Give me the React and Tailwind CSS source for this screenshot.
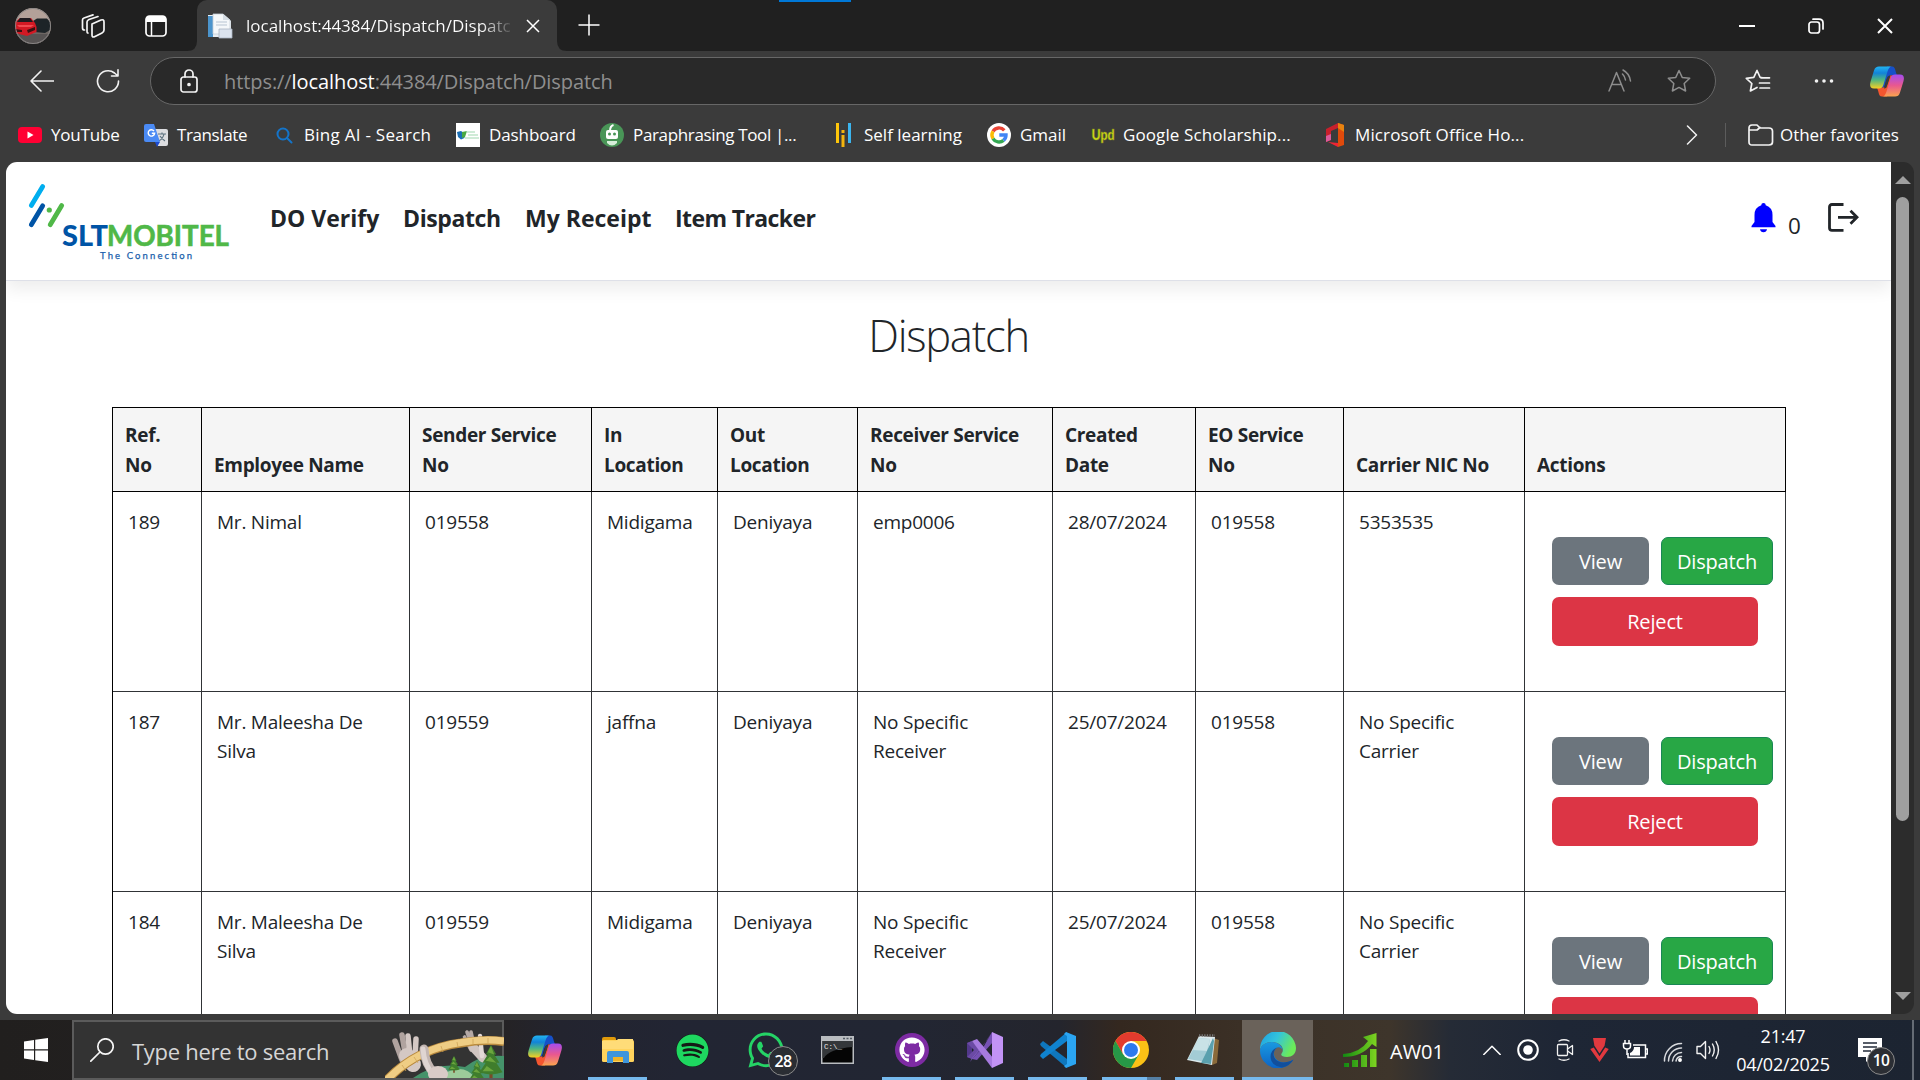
import React from "react";
import { FaSpotify, FaWhatsapp, FaGithub } from "react-icons/fa";

const svgBase = { fill: "none", strokeLinecap: "round", strokeLinejoin: "round" };

function CopilotIcon({ id, className }) {
  return (
    <svg viewBox="0 0 34 30" className={className}>
      <defs>
        <linearGradient id={id + "a"} x1="0" y1="0" x2="0" y2="1">
          <stop offset="0" stopColor="#22b4f2" />
          <stop offset=".3" stopColor="#1283d8" />
          <stop offset=".6" stopColor="#4db583" />
          <stop offset="1" stopColor="#f6d022" />
        </linearGradient>
        <linearGradient id={id + "b"} x1="0" y1="0" x2="0" y2="1">
          <stop offset="0" stopColor="#a44cf0" />
          <stop offset=".5" stopColor="#e9588f" />
          <stop offset="1" stopColor="#fba44f" />
        </linearGradient>
      </defs>
      <path d="M17 0H22C24.5 0 25 2 25.7 5L27 9H21C18 9 17 11 16 14L14 21H11Z" fill="#1650c8" />
      <path d="M17 30H12C9.500 30 9 28 8.300 25L7 21H13C16 21 17 19 18 16L20 9H23Z" fill="#f4562f" />
      <path d="M9 0H22C19.500 0 18.500 2 17.500 5L13.500 18C12.800 20.500 11.500 22 9 22H4C0 22-.5 19 .6 15L4 4C5 1 6.500 0 9 0Z" fill={`url(#${id}a)`} />
      <path d="M25 30H12C14.500 30 15.500 28 16.500 25L20.500 12C21.200 9.500 22.500 8 25 8H30C34 8 34.500 11 33.400 15L30 26C29 29 27.500 30 25 30Z" fill={`url(#${id}b)`} />
      <path d="M17.500 10.500Q18.500 9 20.500 9L16.500 21Q15.500 22 14 22Z" fill="#3a3a3c" />
    </svg>
  );
}

function TitleBar() {
  return (
    <div className="flex h-[51px] items-end bg-[#202020]">
      <div className="flex h-full w-[187px] items-center">
        <svg viewBox="0 0 36 36" className="ml-[15px] h-9 w-9 rounded-full">
          <rect width="36" height="36" fill="#b3a199" />
          <rect y="14" width="36" height="22" fill="#6d6663" />
          <rect y="26" width="36" height="10" fill="#575353" />
          <path d="M18 13L22 10.500H32L35 14V22L30 25L20 24Z" fill="#1d2428" />
          <path d="M0 14L5 10H16L20 15L21.500 19V24L12 28L0 25Z" fill="#d21924" />
          <path d="M5 10H15L18 14H2Z" fill="#1f1b20" />
          <path d="M2 17H19L16 19H4Z" fill="#f04a50" />
          <path d="M0 21L7 22V24H0ZM12 22L20 19V22L13 25Z" fill="#3b1013" />
          <circle cx="18" cy="18" r="17.500" fill="none" stroke="#8a8787" />
        </svg>
        <svg viewBox="0 0 24 24" className="ml-[30px] h-6 w-6" {...svgBase} stroke="#f5f5f5" strokeWidth="1.700">
          <path d="M11 10L20 6Q23 5 23 8V16Q23 18 21 19L14 22.500Q11 24 11 21Z" />
          <path d="M7 19Q6 19 6 17V8Q6 6.500 8 5.500L17 2.500" />
          <path d="M3.500 16Q1.500 16 1.500 14V6Q1.500 4.500 3 4L12 .9" />
        </svg>
        <svg viewBox="0 0 22 22" className="ml-[40px] h-[22px] w-[22px]">
          <rect x="1" y="1" width="20" height="20" rx="3.500" fill="none" stroke="#fff" strokeWidth="1.700" />
          <path d="M1 7V4Q1 1 4 1H18Q21 1 21 4V7Z" fill="#fff" />
          <path d="M6.500 7V21" stroke="#fff" strokeWidth="1.500" />
        </svg>
      </div>
      <svg viewBox="0 0 10 10" className="h-[10px] w-[10px]"><path d="M10 0V10H0Q10 10 10 0Z" fill="#3b3b3b" /></svg>
      <div className="flex h-[51px] w-[360px] items-center rounded-t-[10px] bg-[#3b3b3b] pl-[10px]">
        <svg viewBox="0 0 26 26" className="h-[26px] w-[26px]">
          <path d="M1 2H17L24 8V24H1Z" fill="#e9eef3" />
          <path d="M1 3H6V24H1Z" fill="#4b94cc" />
          <path d="M6 1H16L23 7V21H6Z" fill="#f5f8fa" stroke="#c4cdd6" strokeWidth=".8" />
          <path d="M16 1V7H23" fill="#d5dde4" />
          <path d="M9 9H20M9 12H20" stroke="#cbd5df" strokeWidth="1.500" />
          <path d="M12 16H25V25H12Z" fill="#dbe3ee" stroke="#a9b4c2" strokeWidth=".8" />
        </svg>
        <div className="ml-[13px] w-[267px] whitespace-nowrap bg-gradient-to-r from-white from-88% to-[#4a4a4a] bg-clip-text text-[17px] leading-[26px] text-transparent">
          localhost:44384/Dispatch/Dispatc
        </div>
        <svg viewBox="0 0 14 14" className="ml-[13px] h-[14px] w-[14px]" stroke="#fff" strokeWidth="1.500"><path d="M1 1L13 13M13 1L1 13" /></svg>
      </div>
      <svg viewBox="0 0 10 10" className="h-[10px] w-[10px]"><path d="M0 0V10H10Q0 10 0 0Z" fill="#3b3b3b" /></svg>
      <svg viewBox="0 0 22 22" className="mb-[15px] ml-[11px] h-[22px] w-[22px]" stroke="#fff" strokeWidth="1.500"><path d="M11 .5V21.500M.5 11H21.500" /></svg>
      <div className="ml-[179px] h-[2px] w-[72px] self-start bg-[#0078d7]" />
      <div className="ml-auto mr-[27px] flex h-full items-center gap-[53px]">
        <svg viewBox="0 0 16 16" className="h-4 w-4" stroke="#fff" strokeWidth="2"><path d="M0 8H16" /></svg>
        <svg viewBox="0 0 16 16" className="h-4 w-4" {...svgBase} stroke="#fff" strokeWidth="1.700">
          <rect x="1" y="4" width="10.500" height="11" rx="2.500" /><path d="M5 1.200H11Q15 1.200 15 5V11" />
        </svg>
        <svg viewBox="0 0 16 16" className="h-4 w-4" stroke="#fff" strokeWidth="2"><path d="M1 1L15 15M15 1L1 15" /></svg>
      </div>
    </div>
  );
}

const star = "M12 1.500L15.200 8.400L22.700 9.300L17.200 14.500L18.600 22L12 18.400L5.400 22L6.800 14.500L1.300 9.300L8.800 8.400Z";

function AddressBar() {
  return (
    <div className="flex h-[60px] items-center">
      <svg viewBox="0 0 24 24" className="ml-[30px] h-6 w-6" {...svgBase} stroke="#f2f2f2" strokeWidth="1.600"><path d="M11 2L1 12L11 22M1 12H23.500" /></svg>
      <svg viewBox="0 0 24 24" className="ml-[42px] h-6 w-6" {...svgBase} stroke="#f2f2f2" strokeWidth="1.600"><path d="M22.500 12A10.500 10.500 0 1 1 18.500 4L21.500 6.500M22 .8V7H15.500" /></svg>
      <div className="ml-[30px] flex h-12 w-[1566px] items-center rounded-full border border-[#676767] bg-[#292929]">
        <svg viewBox="0 0 18 24" className="ml-[29px] h-6 w-[18px]" {...svgBase} stroke="#f2f2f2" strokeWidth="1.700">
          <rect x="1" y="8" width="16" height="15" rx="2.500" /><path d="M5 8V5A4 4 0 0 1 13 5V8" /><circle cx="9" cy="15.500" r="1" fill="#f2f2f2" />
        </svg>
        <div className="ml-[26px] mt-[1px] grow whitespace-nowrap text-[20px] leading-[28px] tracking-[-0.080px] text-[#8f8f8f]">
          https://<span className="text-white">localhost</span>:44384/Dispatch/Dispatch
        </div>
        <svg viewBox="0 0 24 24" className="h-6 w-6" {...svgBase} stroke="#8d8d8d" strokeWidth="1.500">
          <path d="M1 22L8.500 3.500L16 22M3.800 15.500H13.200M14.500 5Q17 7.500 17.500 11M15 1Q21.500 4.500 22.500 12" />
        </svg>
        <svg viewBox="0 0 24 24" className="ml-[35px] mr-[24px] h-6 w-6" {...svgBase} stroke="#8d8d8d" strokeWidth="1.500"><path d={star} /></svg>
      </div>
      <svg viewBox="0 0 26 24" className="ml-[29px] h-6 w-[26px]" {...svgBase} stroke="#f2f2f2" strokeWidth="1.700">
        <path d="M17 8.500H15.200L12 1.500L8.800 8.400L1.300 9.300L6.800 14.500L5.400 22L12 18.400M16 8.800H24.500M14.500 14H24.500M15 19H24.500" />
      </svg>
      <svg viewBox="0 0 20 6" className="ml-[43px] h-[6px] w-5" fill="#f2f2f2"><circle cx="2.500" cy="3" r="1.800" /><circle cx="10" cy="3" r="1.800" /><circle cx="17.500" cy="3" r="1.800" /></svg>
      <CopilotIcon id="cpt" className="ml-[36px] h-[31px] w-[34px]" />
    </div>
  );
}

function GoogleG() {
  return (
    <svg viewBox="0 0 24 24" className="h-6 w-6">
      <circle cx="12" cy="12" r="12" fill="#fff" />
      <g fill="none" strokeWidth="3.400">
        <path d="M17.300 7.300A7 7 0 0 0 6 8.400" stroke="#ea4335" />
        <path d="M6 8.400A7 7 0 0 0 6 15.600" stroke="#fbbc05" />
        <path d="M6 15.600A7 7 0 0 0 16.500 17.400" stroke="#34a853" />
        <path d="M16.500 17.400A7 7 0 0 0 19 12H12.300" stroke="#4285f4" />
      </g>
    </svg>
  );
}

const bookmarks = [
  { t: "YouTube", w: "w-[69px] tracking-[-0.200px]", box: "ml-[18px] gap-[9px]", icon: (
    <svg viewBox="0 0 24 24" className="h-6 w-6"><rect y="4" width="24" height="16" rx="4" fill="#ff0033" /><path d="M9.500 8.500V15.500L15.500 12Z" fill="#fff" /></svg>) },
  { t: "Translate", w: "w-[70px] tracking-[-0.400px]", box: "ml-[24px] gap-[9px]", icon: (
    <svg viewBox="0 0 24 24" className="h-6 w-6">
      <path d="M10 6H22Q24 6 24 8V21Q24 23 22 23H14Z" fill="#dcdde0" /><path d="M14 11H22M18 9.500V11M20 11Q19 16 14.500 18M16 13Q18 16 21 18" stroke="#5e7480" fill="none" strokeWidth="1.200" />
      <path d="M11 19H16L13 24Z" fill="#1c4bd0" /><path d="M2 1H10L16 19H2Q0 19 0 17V3Q0 1 2 1Z" fill="#4a8af4" />
      <path d="M10 8A3.200 3.200 0 1 0 10.600 10.300H7.800" stroke="#fff" fill="none" strokeWidth="1.400" />
    </svg>) },
  { t: "Bing AI - Search", w: "w-[128px] tracking-[0.270px]", box: "ml-[25px] gap-[8px]", icon: (
    <svg viewBox="0 0 24 24" className="h-6 w-6" {...svgBase} stroke="#1474c9" strokeWidth="2"><circle cx="11" cy="11" r="5.500" /><path d="M15 15L19.500 19.500" /></svg>) },
  { t: "Dashboard", w: "w-[87px] tracking-[-0.100px]", box: "ml-[24px] gap-[9px]", icon: (
    <svg viewBox="0 0 24 24" className="h-6 w-6"><rect width="24" height="24" fill="#fff" /><path d="M1 9L5 8L8 10L8.500 15L5 16.500L2 14Z" fill="#1b6fb5" /><path d="M6 9L11 8L9 14L6 15Z" fill="#49a942" /><path d="M10 9H19M12 12H22M9 15H23" stroke="#9fd8b0" strokeWidth="1.200" /></svg>) },
  { t: "Paraphrasing Tool |...", w: "w-[165px] tracking-[-0.350px]", box: "ml-[24px] gap-[9px]", icon: (
    <svg viewBox="0 0 24 24" className="h-6 w-6"><circle cx="12" cy="12" r="12" fill="#499557" /><path d="M10 8Q10 3 13.500 2" stroke="#fff" strokeWidth="2" fill="none" /><rect x="6" y="7" width="12" height="9" rx="2" fill="#fff" /><circle cx="9.500" cy="11" r="1.500" fill="#499557" /><circle cx="14.500" cy="11" r="1.500" fill="#499557" /><path d="M7 18H17V20Q12 25 7 20Z" fill="#d7eeda" /></svg>) },
  { t: "Self learning", w: "w-[99px]", box: "ml-[33px] gap-[9px]", icon: (
    <svg viewBox="0 0 24 24" className="h-6 w-6"><path d="M5 0H8V20H5Z" fill="#fec60b" /><path d="M10.500 12H13.500V24H10.500ZM10.500 7H13.500V10H10.500Z" fill="#f3b40d" /><path d="M17 0H20V20H17Z" fill="#3bb5ef" /></svg>) },
  { t: "Gmail", w: "w-[46px]", box: "ml-[24px] gap-[9px]", icon: <GoogleG /> },
  { t: "Google Scholarship...", w: "w-[169px] tracking-[0.100px]", box: "ml-[25px] gap-[8px]", icon: (
    <svg viewBox="0 0 24 24" className="h-6 w-6 overflow-visible"><text x="12" y="16.500" textAnchor="middle" textLength="23" lengthAdjust="spacingAndGlyphs" fontFamily="Lato, sans-serif" fontWeight="900" fontSize="15" fill="#d3e016" stroke="#7b8420" strokeWidth=".6">Upd</text></svg>) },
  { t: "Microsoft Office Ho...", w: "w-[172px] tracking-[0.120px]", box: "ml-[31px] gap-[8px]", icon: (
    <svg viewBox="0 0 24 24" className="h-6 w-6"><path d="M3 6L15 0V5L8 8V17L3 19Z" fill="#c8202c" /><path d="M3 13L8 11V17L3 19Z" fill="#dc5a9a" /><path d="M15 0L21 2V22L15 24Z" fill="#e04a0c" /><path d="M15 0L21 2V9L15 5Z" fill="#e88310" /><path d="M5 19L15 20V24Z" fill="#ef2434" /></svg>) },
];

function BookmarksBar() {
  return (
    <div className="flex h-[51px] items-center pb-[3px] pt-0 text-[17px] leading-[26px] text-white">
      {bookmarks.map((b) => (
        <div key={b.t} className={`flex items-center ${b.box}`}>
          {b.icon}
          <span className={`whitespace-nowrap ${b.w}`}>{b.t}</span>
        </div>
      ))}
      <svg viewBox="0 0 12 20" className="ml-auto h-5 w-3" {...svgBase} stroke="#f2f2f2" strokeWidth="1.500"><path d="M1.500 1L10.500 10L1.500 19" /></svg>
      <div className="ml-[27px] h-6 w-px bg-[#5c5c5c]" />
      <svg viewBox="0 0 26 24" className="ml-[22px] h-6 w-[26px]" {...svgBase} stroke="#f2f2f2" strokeWidth="1.700">
        <path d="M1 19V5Q1 2 4 2H9L12 5H21Q24.500 5 24.500 8V19Q24.500 22 21 22H4Q1 22 1 19ZM1 7H9L12 4.500" />
      </svg>
      <span className="ml-[6px] mr-[21px] w-[119px] whitespace-nowrap tracking-[-0.050px]">Other favorites</span>
    </div>
  );
}

function Logo() {
  return (
    <svg viewBox="20 175 215 90" className="h-[90px] w-[215px]">
      <g strokeWidth="4.800" strokeLinecap="round">
        <path d="M42.700 186.500L31.300 205.500" stroke="#00aeef" />
        <path d="M42.700 205.800L31.300 224.800" stroke="#0054a6" />
        <path d="M61.700 205.500L50.200 224.800" stroke="#50b848" />
      </g>
      <circle cx="49.300" cy="210" r="2.600" fill="#50b848" />
      <g fontFamily="Lato, sans-serif" fontWeight="900">
        <text x="62" y="245.600" fontSize="28.500" fill="#0054a6" textLength="46" lengthAdjust="spacingAndGlyphs">SLT</text>
        <text x="107" y="245.600" fontSize="28.500" fill="#50b848" fontWeight="700" stroke="#50b848" strokeWidth=".6" textLength="122" lengthAdjust="spacingAndGlyphs">MOBITEL</text>
      </g>
      <text x="100" y="258.800" fontSize="9.500" fontFamily="Lato, sans-serif" fontWeight="400" fill="#1a5fac" stroke="#1a5fac" strokeWidth=".25" textLength="92">The Connection</text>
    </svg>
  );
}

function NavBar() {
  return (
    <header className="flex h-[119px] shrink-0 items-start border-b border-[#dee0e8] shadow-[0_8px_16px_rgba(0,0,0,0.075)]">
      <div className="ml-[14px] mt-[13px]"><Logo /></div>
      <nav className="mt-[40px] flex text-[23px] font-bold leading-[32px] text-[#212529]">
        <a className="ml-[35px] w-[133px] whitespace-nowrap">DO Verify</a>
        <a className="w-[122px] whitespace-nowrap tracking-[-0.400px]">Dispatch</a>
        <a className="w-[150px] whitespace-nowrap">My Receipt</a>
        <a className="w-[150px] whitespace-nowrap tracking-[-0.600px]">Item Tracker</a>
      </nav>
      <svg viewBox="0 0 25 30" className="ml-auto mt-[41px] h-[30px] w-[25px]" fill="#0000ff">
        <path d="M12.500 0A2.200 2.200 0 0 1 14.700 2.300Q21.500 4.500 21.500 12V19L24.500 23V24.300H.5V23L3.500 19V12Q3.500 4.500 10.300 2.300A2.200 2.200 0 0 1 12.500 0ZM9 26.300H16Q15.500 29.300 12.500 29.300T9 26.300Z" />
      </svg>
      <span className="ml-[12px] mt-[48px] w-[13px] text-[22.500px] leading-[32px] text-[#212529]">0</span>
      <svg viewBox="0 0 31 29" className="ml-[27px] mr-[32px] mt-[41px] h-[29px] w-[31px]" fill="none" stroke="#212529" strokeWidth="2.800">
        <path d="M15.500 1.500H4Q1.500 1.500 1.500 4V25Q1.500 27.300 4 27.300H15.500M10 14.300H29.500M22.500 7.800L29 14.300L22.500 20.800" />
      </svg>
    </header>
  );
}

const headers = ["Ref. No", "Employee Name", "Sender Service No", "In Location", "Out Location", "Receiver Service No", "Created Date", "EO Service No", "Carrier NIC No", "Actions"];
const wraps = ["w-[50px]", "w-[180px]", "w-[150px]", "w-[90px]", "w-[90px]", "w-[165px]", "w-[90px]", "w-[110px]", "w-[160px]", "w-[160px]"];
const rows = [
  ["189", "Mr. Nimal", "019558", "Midigama", "Deniyaya", "emp0006", "28/07/2024", "019558", "5353535"],
  ["187", "Mr. Maleesha De Silva", "019559", "jaffna", "Deniyaya", "No Specific Receiver", "25/07/2024", "019558", "No Specific Carrier"],
  ["184", "Mr. Maleesha De Silva", "019559", "Midigama", "Deniyaya", "No Specific Receiver", "25/07/2024", "019558", "No Specific Carrier"],
];
const cols = "grid grid-cols-[89px_208px_182px_126px_140px_195px_143px_148px_181px_261px]";

function DispatchTable() {
  return (
    <div className="ml-[106px] mt-[42px] w-[1674px] shrink-0 border-l border-t border-black text-[19px] text-[#212529]">
      <div className={`${cols} h-[84px] bg-[#f5f5f5] font-bold leading-[30px] tracking-[-0.320px]`}>
        {headers.map((h, i) => (
          <div key={h} className="flex items-end border-b border-r border-black pb-[11px] pl-[12px]">
            <span className={wraps[i]}>{h}</span>
          </div>
        ))}
      </div>
      {rows.map((r, n) => (
        <div key={r[0]} className={`${cols} leading-[29px] tracking-[-0.230px] ${n === 2 ? "h-[123px] overflow-hidden" : "h-[200px]"}`}>
          {r.map((c, i) => (
            <div key={i} className="border-b border-r border-[#303336] pl-[15px] pt-[16px]">
              <div className={i === 1 ? "w-[160px]" : i === 5 || i === 8 ? "w-[120px]" : ""}>{c}</div>
            </div>
          ))}
          <div className="border-b border-r border-[#303336] pl-[27px] pt-[45px] text-[20px] leading-[30px] tracking-[-0.150px] text-white">
            <div className="flex gap-[12px]">
              <button className="h-12 w-[97px] rounded-[7px] bg-[#6c757d] pt-[1px]">View</button>
              <button className="h-12 w-[112px] rounded-[7px] border border-[#198754] bg-[#28a745] pt-[1px]">Dispatch</button>
            </div>
            <button className="mt-[12px] h-[49px] w-[206px] rounded-[7px] bg-[#dc3545] pt-[1px]">{n === 2 ? "" : "Reject"}</button>
          </div>
        </div>
      ))}
    </div>
  );
}

function Page() {
  return (
    <div className="ml-[6px] flex h-[852px] w-[1908px] overflow-hidden rounded-[11px]">
      <main className="flex w-[1885px] flex-col overflow-hidden bg-white">
        <NavBar />
        <h1 className="mt-[26px] h-[58px] shrink-0 text-center text-[43.500px] font-light leading-[58px] tracking-[-1.250px] text-[#212529]">Dispatch</h1>
        <DispatchTable />
      </main>
      <div className="flex w-[23px] flex-col items-center bg-[#2c2c2c]">
        <svg viewBox="0 0 16 8" className="mt-[14px] h-2 w-4" fill="#9f9f9f"><path d="M8 0L16 8H0Z" /></svg>
        <div className="mt-[13px] h-[624px] w-[13px] rounded-full bg-[#9f9f9f]" />
        <svg viewBox="0 0 16 8" className="mb-[14px] mt-auto h-2 w-4" fill="#9f9f9f"><path d="M0 0H16L8 8Z" /></svg>
      </div>
    </div>
  );
}

function Tree({ x, y, s }) {
  return (
    <g transform={`translate(${x} ${y}) scale(${s})`}>
      <path d="M-1.500 24H1.500V32H-1.500Z" fill="#7a4a26" />
      <path d="M0 0L5 9H3L8 17H5L11 26Q0 30-11 26L-5 17H-8L-3 9H-5Z" fill="#3f7d2c" />
      <path d="M0 1L3 9L-3 7ZM-1 11L5 17L-5 15ZM-4 20L3 25L-8 25Z" fill="#6ba53d" />
    </g>
  );
}

function SearchArt() {
  return (
    <svg viewBox="0 2 119 56" className="h-[56px] w-[119px]">
      <path d="M28 58Q52 41 80 47Q96 34 119 36V58Z" fill="#45936a" />
      <path d="M62 52Q80 44 90 58H55Z" fill="#9ccb9a" />
      <g stroke="#b5a9a5" strokeLinecap="round" fill="none">
        <path d="M79.500 17L86 30M82 12L88 28M86 12L90 30" strokeWidth="3.600" />
        <path d="M88 27L98 38" strokeWidth="9" stroke="#d0c4c0" />
        <path d="M95 16L97 36" strokeWidth="4.500" stroke="#e3d9d6" />
      </g>
      <g stroke="#d4c8c4" strokeLinecap="round" fill="none">
        <path d="M10 21L17 40M17 15L21 38" strokeWidth="5.500" stroke="#b0a39f" />
        <path d="M23 16L25 36M31 19L30 38" strokeWidth="5.500" />
        <path d="M22 36L28 44" strokeWidth="16" />
      </g>
      <path d="M0 62Q30 29 76 23Q98 19 119 21.500" fill="none" stroke="#b98a3e" strokeWidth="9" />
      <path d="M0 62Q30 29 76 22.500Q98 18.500 119 21" fill="none" stroke="#efcd84" strokeWidth="7" />
      <path d="M17 45L21 51M29 37L33 43M56 26L58 32M72 22L73 27M88 19L88 24M103 18L103 23" stroke="#cfa458" strokeWidth=".8" />
      <path d="M39 29Q40 45 50 54" fill="none" stroke="#c3b6b2" strokeWidth="9" strokeLinecap="round" />
      <path d="M38 29Q39 45 48 54" fill="none" stroke="#dfd5d2" strokeWidth="5" strokeLinecap="round" />
      <ellipse cx="53" cy="54" rx="10" ry="8" fill="#d9cbc7" />
      <Tree x={69} y={36} s={0.52} />
      <Tree x={92} y={41} s={0.72} />
      <Tree x={106} y={25} s={1.05} />
    </svg>
  );
}

const apps = [
  { n: "copilot", el: <CopilotIcon id="cpb" className="h-[31px] w-[34px]" /> },
  { n: "explorer", on: true, el: (
    <svg viewBox="0 0 34 34" className="h-[34px] w-[34px]">
      <path d="M1 6Q1 4 3 4H13Q15 4 15 6V10H1Z" fill="#e09a0a" /><rect x="1" y="7" width="32" height="22" rx="1.500" fill="#ffd35c" /><path d="M1 8H15L17 6H32V16H1Z" fill="#ffdc78" />
      <path d="M6 30V20Q6 18 8 18H26Q28 18 28 20V30H22V24H12V30Z" fill="#3e95dc" /><path d="M12 24H22V28H12Z" fill="#f0b429" />
    </svg>) },
  { n: "spotify", el: <span className="ml-[2px] flex h-[33px] w-[33px] items-center justify-center rounded-full bg-[#151b16] text-[33px] text-[#1ed760]"><FaSpotify /></span> },
  { n: "whatsapp", el: (
    <span className="relative ml-[3px] text-[40px] text-[#25d366]"><FaWhatsapp />
      <span className="absolute left-[22px] top-[16px] flex h-[30px] w-[30px] items-center justify-center rounded-full border border-[#8b8b8b] bg-[#2a2d33] text-[16px] font-semibold leading-none tracking-[-0.500px] text-white">28</span>
    </span>) },
  { n: "cmd", el: (
    <svg viewBox="0 0 33 28" className="h-7 w-[33px]"><rect width="33" height="28" fill="#b9bcc0" /><path d="M22 2.500H31" stroke="#535a63" strokeWidth="1.500" strokeDasharray="2 1.500" /><rect x="1.500" y="5" width="30" height="21.500" fill="#050505" /><path d="M1.500 5H31.500V11Q8 13 3 22H1.500Z" fill="#34373a" /><text x="3" y="12.500" fontFamily="Liberation Mono, monospace" fontSize="7.500" fill="#e8e8e8">C:\_</text></svg>) },
  { n: "github", on: true, el: <span className="ml-px flex h-[34px] w-[34px] items-center justify-center rounded-full bg-[#7d2ba3] text-[26px] text-white"><FaGithub /></span> },
  { n: "vs", on: true, el: (
    <svg viewBox="0 0 36 36" className="ml-px h-9 w-9"><path d="M0 11L5 9V27L0 25Z" fill="#52388a" /><path d="M0 11L5 9L13 18L5 27L0 25L7 18Z" fill="#6b4aa5" /><path d="M25 0L17 12L3 30L5 26L20 8Z" fill="#7f5cc0" /><path d="M25 0L26 10L10 28L5 27L17 14Z" fill="#7651b4" /><path d="M5 9L10 7L27 27L25 36Z" fill="#a77be0" /><path d="M25 0L36 5V31L25 36Z" fill="#c293f5" /></svg>) },
  { n: "vscode", on: true, el: (
    <svg viewBox="0 0 36 36" className="ml-px h-9 w-9"><path d="M0 12L3 9L27 27V36L1 14Z" fill="#0f77bd" /><path d="M0 24L3 27L27 9V0L1 22Z" fill="#1083cf" /><path d="M26 0L36 4V32L26 36L24 34L27 32V4L24 2Z" fill="#2ba5f2" /></svg>) },
  { n: "chrome", on: true, el: (
    <svg viewBox="0 0 36 36" className="h-9 w-9"><circle cx="18" cy="18" r="18" fill="#fbc116" /><path d="M2.400 9A18 18 0 0 1 33.600 9H18L10.200 22.500Z" fill="#e33b2e" /><path d="M2.400 9A18 18 0 0 0 18 36L25.800 22.500H10.200Z" fill="#279847" /><circle cx="18" cy="18" r="9" fill="#fff" /><circle cx="18" cy="18" r="7" fill="#2d79ee" /></svg>) },
  { n: "notepad", on: true, el: (
    <svg viewBox="0 0 34 34" className="mr-[2px] h-[34px] w-[34px]"><path d="M27 5L33 7L31 30L26 32Z" fill="#8a6a3a" /><path d="M13 3L29 4L26 32L1 27Z" fill="#dce9ec" /><path d="M13 5L24 6L20 29L2 26Z" fill="#a3ccd5" /><path d="M13 5L24 6L21 18L7 17Z" fill="#c9e2e6" /><path d="M20 20L27 5L28 8L25 31L15 30Z" fill="#5aa0ad" /><path d="M13 2.500H29" stroke="#777" strokeWidth="2.500" strokeDasharray="1.300 1.300" /></svg>) },
  { n: "edge", active: true, el: (
    <svg viewBox="0 0 36 36" className="h-9 w-9">
      <defs>
        <linearGradient id="eg1" x1="0" y1="0" x2="1" y2=".4"><stop offset="0" stopColor="#1b9de2" /><stop offset=".5" stopColor="#33c4dc" /><stop offset="1" stopColor="#6bea5a" /></linearGradient>
        <linearGradient id="eg2" x1="0" y1="0" x2="0" y2="1"><stop offset="0" stopColor="#1a9ae0" /><stop offset="1" stopColor="#0d63c4" /></linearGradient>
      </defs>
      <path d="M0 18A18 18 0 0 1 36 16C36 22 32 25 27 25C22 25 20 23 22 21C25 16 20 10 12 10C6 10 1 13 0 18Z" fill="url(#eg1)" />
      <path d="M0 18C1 13 6 10 12 10C18 10 23 14 22.500 19C22 14 15 14 14 20C13 27 20 32 28 30C30 29.500 32 28.500 33.500 27.500A18 18 0 0 1 0 18Z" fill="url(#eg2)" />
      <path d="M14 20C12 26 18 32 27 30Q31 29 33.500 27.500Q30 34 22 35.500Q11 34 10.500 25Q10.500 18 17 15.500Q14.500 17 14 20Z" fill="#124f9c" />
    </svg>) },
];

function Taskbar() {
  return (
    <div className="flex h-[60px] items-center bg-[linear-gradient(90deg,#211f1e_0px,#252325_504px,#23242f_560px,#222533_680px,#222633_900px,#24252d_1060px,#34281f_1120px,#3b3026_1240px,#3e352b_1390px,#252b36_1450px,#1e2635_1560px,#1c2431_1920px)] text-white">
      <div className="flex w-[72px] items-center justify-center">
        <svg viewBox="0 0 24 24" className="h-6 w-6" fill="#fff"><path d="M0 3.400L10 2V11.300H0ZM11.200 1.800L24 0V11.300H11.200ZM0 12.500H10V22L0 20.600ZM11.200 12.500H24V24L11.200 22.200Z" /></svg>
      </div>
      <div className="flex h-[60px] w-[432px] items-center border-2 border-[#5b5b5b] bg-[#333333]">
        <svg viewBox="0 0 24 24" className="ml-[16px] h-6 w-6" {...svgBase} stroke="#f5f5f5" strokeWidth="1.700"><circle cx="15.500" cy="8.500" r="7.700" /><path d="M10 14L.8 23.200" /></svg>
        <span className="ml-[18px] mt-[2px] w-[253px] whitespace-nowrap text-[22px] leading-[30px] tracking-[-0.280px] text-[#d6d6d6]">Type here to search</span>
        <div className="-mr-[2px] w-[119px] shrink-0"><SearchArt /></div>
      </div>
      <div className="ml-[4px] flex h-full w-[807px]">
        {apps.map((a) => (
          <div key={a.n} className="flex h-full w-[73.300px] flex-col items-center">
            <div className={a.active ? "flex h-[57px] w-[71px] items-center justify-center bg-[#6a625a] pt-[3px]" : "flex h-[57px] items-center pt-[3px]"}>{a.el}</div>
            {a.active ? <div className="h-[3px] w-[71px] bg-[#76b9ed]" /> : a.n === "chrome" ? (
              <div className="flex"><div className="h-[3px] w-[45px] bg-[#76b9ed]" /><div className="h-[3px] w-[14px] bg-[#557fa3]" /></div>
            ) : a.on ? <div className="h-[3px] w-[59px] bg-[#76b9ed]" /> : null}
          </div>
        ))}
      </div>
      <svg viewBox="0 0 34 34" className="ml-[28px] h-[34px] w-[34px]">
        <defs><linearGradient id="gr" x1="0" y1="0" x2="1" y2="0"><stop offset="0" stopColor="#128a12" /><stop offset="1" stopColor="#7ed321" /></linearGradient></defs>
        <path d="M0 21Q17 20 25 8L20 4L33.500 0V14L29 11Q19 24 0 24Z" fill="url(#gr)" />
        <path d="M1 30H6V34H1ZM9 27H15V34H9ZM18 22H24V34H18ZM27 16H33.500V34H27Z" fill="url(#gr)" />
      </svg>
      <span className="ml-[13px] mt-[3px] w-[54px] whitespace-nowrap text-[20px] leading-[28px]">AW01</span>
      <div className="ml-[39px] flex items-center">
        <svg viewBox="0 0 18 10" className="h-[10px] w-[18px]" {...svgBase} stroke="#fff" strokeWidth="1.500"><path d="M.8 9.500L9 1.200L17.200 9.500" /></svg>
        <svg viewBox="0 0 22 22" className="ml-[16px] h-[22px] w-[22px]"><circle cx="11" cy="11" r="9.800" fill="none" stroke="#fff" strokeWidth="2" /><circle cx="11" cy="11" r="4.800" fill="#fff" /></svg>
        <svg viewBox="0 0 18 24" className="ml-[17px] h-6 w-[18px]" {...svgBase} stroke="#f2f2f2" strokeWidth="1.300"><rect x="1.500" y="6.500" width="10" height="11" rx="1" /><path d="M11.500 11L16.500 7.500V16.500L11.500 13M3 3Q8 .5 13 3M3 21Q8 23.500 13 21" /></svg>
        <svg viewBox="0 0 20 26" className="ml-[16px] h-6 w-[19px]" fill="#e2393f"><path d="M3 0H17L15.500 8.500L10 16.800L4.500 8.500Z" /><path d="M0 12L3.800 10.300L10 19.800L16.200 10.300L20 12L10 26Z" /></svg>
        <svg viewBox="0 0 26 22" className="ml-[13px] h-[22px] w-[26px]" fill="none" stroke="#fff" strokeWidth="1.500"><path d="M11 6H23.500V18.500H6V14M24 10H25.500V15H24" /><path d="M12 8H18V16.500H8V14Q12 12 12 8Z" fill="#fff" stroke="none" /><path d="M3 1V4M7 1V4M1.500 4.500H8.500V7Q8.500 10 5 10T1.500 7ZM5 10V16" /></svg>
        <svg viewBox="0 0 20 20" className="ml-[15px] mt-[4px] h-5 w-5" {...svgBase} stroke="#d8dade" strokeWidth="1.500"><path d="M1.500 19A17 17 0 0 1 18.500 1.500M5.500 19A13 13 0 0 1 18.500 6M9.500 19A9 9 0 0 1 18.500 10.500M13 19A5.500 5.500 0 0 1 18.500 14.500" /><circle cx="17" cy="18" r="1.200" fill="#fff" stroke="#fff" /></svg>
        <svg viewBox="0 0 24 22" className="ml-[13px] h-[22px] w-6" {...svgBase} stroke="#f2f2f2" strokeWidth="1.400"><path d="M1 7.500H4.500L9.500 2.500V19.500L4.500 14.500H1ZM13 7.500Q15 11 13 14.500M16.500 5Q20 11 16.500 17M20 2.500Q25 11 20 19.500" /></svg>
      </div>
      <div className="ml-[11px] w-[104px] text-center text-[18px] leading-[28px] tracking-[-0.200px]">
        <div>21:47</div>
        <div>04/02/2025</div>
      </div>
      <div className="relative ml-[23px] h-6 w-6">
        <svg viewBox="0 0 24 24" className="h-6 w-6"><path d="M0 0H24V19H13L8 24V19H0Z" fill="#fff" /><path d="M5 5H19M5 9H19M5 13H13" stroke="#222a38" strokeWidth="1.600" /></svg>
        <span className="absolute left-[9px] top-[9px] flex h-[28px] w-[28px] items-center justify-center rounded-full border border-[#8b8b8b] bg-[#2b2e34] text-[15.500px] font-semibold leading-none tracking-[-0.500px]">10</span>
      </div>
      <div className="ml-auto mr-[6px] h-[60px] w-[2px] bg-[#646b75]" />
    </div>
  );
}

export default function App() {
  return (
    <div className="flex h-[1080px] w-[1920px] flex-col overflow-hidden bg-[#3b3b3b] font-['Open_Sans','Noto_Sans',sans-serif]">
      <TitleBar />
      <AddressBar />
      <BookmarksBar />
      <Page />
      <div className="h-[6px]" />
      <Taskbar />
    </div>
  );
}
